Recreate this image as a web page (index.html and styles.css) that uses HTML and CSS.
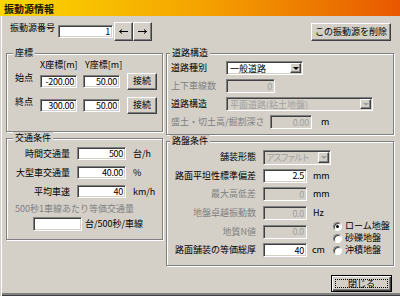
FILE: index.html
```html
<!DOCTYPE html>
<html lang="ja">
<head>
<meta charset="utf-8">
<title>振動源情報</title>
<link rel="stylesheet" href="styles.css">
</head>
<body>
<div class="window">
  <div class="titlebar">振動源情報</div>
  <div class="content">
    <div class="toprow">
      <span class="toplbl">振動源番号</span>
      <span class="field w55">1</span>
      <span class="btn arrow"><svg width="9" height="5" viewBox="0 0 9 5"><path d="M0.5 2.5H9M0.5 2.5L3 0.5M0.5 2.5L3 4.5" stroke="#000" stroke-width="1" fill="none"/></svg></span>
      <span class="btn arrow"><svg width="9" height="5" viewBox="0 0 9 5"><path d="M0 2.5H8.5M8.5 2.5L6 0.5M8.5 2.5L6 4.5" stroke="#000" stroke-width="1" fill="none"/></svg></span>
      <span class="btn del">この振動源を削除</span>
    </div>

    <div class="columns">
      <div class="col">
        <fieldset class="group g-coord">
          <legend>座標</legend>
          <div class="coord-head"><span></span><span>X座標[m]</span><span class="yh">Y座標[m]</span></div>
          <div class="coord-row">
            <span class="clbl">始点</span>
            <span class="field c">-200.00</span>
            <span class="field c">50.00</span>
            <span class="btn conn">接続</span>
          </div>
          <div class="coord-row second">
            <span class="clbl">終点</span>
            <span class="field c">300.00</span>
            <span class="field c">50.00</span>
            <span class="btn conn">接続</span>
          </div>
        </fieldset>

        <fieldset class="group g-traffic">
          <legend>交通条件</legend>
          <div class="trow"><span class="tlbl">時間交通量</span><span class="field t">500</span><span>台/h</span></div>
          <div class="trow"><span class="tlbl">大型車交通量</span><span class="field t">40.00</span><span>%</span></div>
          <div class="trow"><span class="tlbl">平均車速</span><span class="field t">40</span><span>km/h</span></div>
          <div class="note">500秒1車線あたり等価交通量</div>
          <div class="lastrow"><span class="field t h14"></span><span class="lunit">台/500秒/車線</span></div>
        </fieldset>
      </div>

      <div class="col">
        <fieldset class="group right g-road">
          <legend>道路構造</legend>
          <div class="rrow">
            <span>道路種別</span>
            <span class="select s1"><span class="val">一般道路</span><span class="dd"><i class="tri"></i></span></span>
          </div>
          <div class="rrow">
            <span class="dis">上下車線数</span>
            <span class="field off r1">0</span>
          </div>
          <div class="rrow">
            <span>道路構造</span>
            <span class="select off s2"><span class="val">平面道路(粘土地盤)</span><span class="dd"><i class="tri"></i></span></span>
          </div>
          <div class="rrow wide">
            <span class="dis">盛土・切土高/掘割深さ</span>
            <span class="field off r2">0.00</span>
            <span class="munit">m</span>
          </div>
        </fieldset>

        <fieldset class="group right g-base">
          <legend>路盤条件</legend>
          <div class="bgrid">
            <span class="blbl">舗装形態</span>
            <span class="select off s3 ctl"><span class="val narrow">アスファルト</span><span class="dd"><i class="tri"></i></span></span>

            <span class="blbl">路面平坦性標準偏差</span>
            <span class="field b ctl">2.5</span>
            <span class="bunit">mm</span>

            <span class="blbl dis">最大高低差</span>
            <span class="field b off ctl">0</span>
            <span class="bunit">mm</span>

            <span class="blbl dis">地盤卓越振動数</span>
            <span class="field b off ctl">0.0</span>
            <span class="bunit">Hz</span>

            <span class="blbl dis">地質N値</span>
            <span class="field b off ctl">0.0</span>

            <span class="blbl">路面舗装の等価総厚</span>
            <span class="field b h15 ctl">40</span>
            <span class="bunit cm">cm</span>

            <div class="radios">
              <label class="radio"><span class="dot on"></span>ローム地盤</label>
              <label class="radio"><span class="dot"></span>砂礫地盤</label>
              <label class="radio"><span class="dot"></span>沖積地盤</label>
            </div>
          </div>
        </fieldset>
      </div>
    </div>

    <div class="footer">
      <span class="btn default"><span class="focus">閉じる</span></span>
    </div>
  </div>
</div>
</body>
</html>
```

FILE: styles.css
```css
* { box-sizing: border-box; }

body {
  margin: 0;
  font-family: "Noto Sans CJK JP", "Noto Sans", sans-serif;
  font-size: 9px;
  line-height: 12px;
  color: #000;
}

.window {
  width: 400px;
  height: 296px;
  background: #d4d0c8;
  box-shadow: inset 1px 0 #d4d0c8, inset 2px 0 #fff, inset 0 -1px #404040, inset 0 -3px #808080;
  overflow: hidden;
}

.titlebar {
  height: 16px;
  padding-left: 4px;
  background: linear-gradient(90deg, #fcd800 0%, #f8be00 25%, #f5a300 50%, #ee7e00 75%, #e85800 100%);
  font-size: 10px;
  font-weight: bold;
  line-height: 17px;
  color: #1a1400;
}

.content {
  padding: 6px 6px 0;
}

/* generic controls */
.btn {
  display: inline-flex;
  align-items: center;
  justify-content: center;
  background: #d4d0c8;
  border: 1px solid;
  border-color: #fff #404040 #404040 #fff;
  box-shadow: inset -1px -1px #808080;
  white-space: nowrap;
}

.field {
  display: inline-flex;
  align-items: center;
  justify-content: flex-end;
  height: 13px;
  padding-right: 2px;
  background: #fff;
  border: 1px solid;
  border-color: #808080 #fff #fff #808080;
  box-shadow: inset 1px 1px #404040, inset -1px -1px #d4d0c8;
  line-height: 1;
  letter-spacing: -0.3px;
  white-space: nowrap;
}

.field.off {
  background: #d4d0c8;
  color: #a0a0a0;
}

.dis { color: #808080; }

.select {
  display: flex;
  height: 14px;
  background: #fff;
  border: 1px solid;
  border-color: #808080 #fff #fff #808080;
  box-shadow: inset 1px 1px #404040, inset -1px -1px #d4d0c8;
  padding: 1px;
  line-height: 1;
}
.select .val {
  flex: 1;
  display: flex;
  align-items: center;
  padding-left: 2px;
  white-space: nowrap;
  overflow: hidden;
}
.select .val.narrow { letter-spacing: -2px; padding-left: 1px; }
.select .dd {
  width: 11px;
  display: flex;
  align-items: center;
  justify-content: center;
  background: #d4d0c8;
  border: 1px solid;
  border-color: #fff #404040 #404040 #fff;
  box-shadow: inset -1px -1px #808080;
}
.tri {
  width: 0;
  height: 0;
  border-left: 3px solid transparent;
  border-right: 3px solid transparent;
  border-top: 3px solid #000;
}
.select.off { background: #d4d0c8; color: #a0a0a0; }
.select.off .tri { border-top-color: #a0a0a0; }

/* top row */
.toprow {
  display: flex;
  align-items: center;
  height: 19px;
}
.toplbl {
  align-self: flex-start;
  margin-left: 4px;
  width: 48px;
}
.w55 { width: 55px; }
.arrow { width: 19px; height: 19px; }
.toprow .field + .arrow { margin-left: 1px; }
.del {
  margin-left: auto;
  margin-right: 3px;
  width: 80px;
  height: 18px;
}

/* columns */
.columns {
  display: grid;
  grid-template-columns: 157px 228px;
  column-gap: 3px;
  margin-top: 6px;
}
.col {
  display: flex;
  flex-direction: column;
}

fieldset.group {
  margin: 0;
  padding: 0 0 0 8px;
  min-width: 0;
  border: 1px solid #808080;
  box-shadow: inset 1px 1px #fff, 1px 1px #fff;
}
fieldset.group.right { padding-left: 4px; }
fieldset.group legend {
  padding: 0 2px;
  margin-left: -2px;
  line-height: 12px;
  background: #d4d0c8;
}
fieldset.group.right legend { margin-left: -1px; }

/* coordinates */
.g-coord { height: 85px; }
.coord-head, .coord-row {
  display: grid;
  grid-template-columns: 25px 43px 44px 30px;
}
.coord-head { height: 12px; }
.yh { padding-left: 2px; }
.coord-row {
  height: 18px;
  margin-top: 1px;
  align-items: center;
}
.coord-row.second { margin-top: 6px; }
.clbl { align-self: start; }
.field.c { width: 37px; }
.conn { width: 30px; height: 17px; }

/* traffic */
.g-traffic { height: 108px; }
.trow {
  display: grid;
  grid-template-columns: 62px 56px auto;
  align-items: center;
  height: 19px;
}
.tlbl { text-align: right; padding-right: 7px; white-space: nowrap; }
.field.t { width: 49px; }
.note {
  margin-top: 2px;
  color: #808080;
  white-space: nowrap;
}
.lastrow {
  display: flex;
  align-items: center;
  margin-top: 1px;
  padding-left: 18px;
  height: 16px;
}
.h14 { height: 14px; }
.lunit { margin-left: 3px; }

/* road structure */
.g-road { height: 88px; }
.rrow {
  display: grid;
  grid-template-columns: 55px auto;
  justify-content: start;
  justify-items: start;
  align-items: center;
  height: 18px;
}
.rrow span:first-child { white-space: nowrap; }
.rrow.wide { grid-template-columns: 99px 42px auto; }
.s1 { width: 77px; }
.s2 { width: 147px; }
.field.r1 { width: 49px; height: 14px; }
.field.r2 { width: 42px; height: 14px; }
.munit { margin-left: 9px; }

/* base */
.g-base { height: 131px; margin-top: -3px; }
.bgrid {
  display: grid;
  grid-template-columns: 92px 50px 20px auto;
  grid-template-rows: repeat(6, 18.6px);
  align-items: center;
  padding-top: 1px;
}
.blbl {
  grid-column: 1;
  text-align: right;
  padding-right: 7px;
  white-space: nowrap;
}
.ctl { grid-column: 2; }
.bunit { grid-column: 3; white-space: nowrap; }
.s3 { width: 68px; height: 15px; }
.field.b { width: 44px; height: 14px; }
.h15 { height: 15px; }
.bunit.cm { margin-left: -1px; }

.radios {
  grid-column: 4;
  grid-row: 5 / span 2;
  align-self: start;
  margin-top: -2px;
  display: flex;
  flex-direction: column;
}
.radio {
  display: flex;
  align-items: center;
  height: 12px;
  white-space: nowrap;
}
.dot {
  width: 9px;
  height: 9px;
  margin-right: 3px;
  border-radius: 50%;
  background: #fff;
  border: 1px solid;
  border-color: #808080 #fff #fff #808080;
  box-shadow: inset 1px 1px #404040;
  display: flex;
  align-items: center;
  justify-content: center;
}
.dot.on::after {
  content: "";
  width: 3px;
  height: 3px;
  border-radius: 50%;
  background: #000;
}

/* footer */
.footer {
  display: flex;
  justify-content: flex-end;
  margin-top: 9px;
  padding-right: 2px;
}
.btn.default {
  width: 61px;
  height: 17px;
  border: 1px solid #000;
  box-shadow: inset 1px 1px #fff, inset -1px -1px #404040, inset -2px -2px #808080;
  padding: 3px;
}
.focus {
  width: 100%;
  height: 100%;
  display: flex;
  align-items: center;
  justify-content: center;
  outline: 1px dotted #000;
  outline-offset: -1px;
}
```
